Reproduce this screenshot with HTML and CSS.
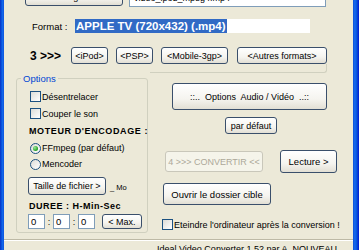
FILE: index.html
```html
<!DOCTYPE html>
<html lang="fr">
<head>
<meta charset="utf-8">
<title>Video Converter</title>
<link rel="stylesheet" href="styles.css">
</head>
<body>
<div class="window">
  <div class="frame-left"></div>
  <div class="client">
    <div class="top-row">
      <button class="btn save-btn">2 &gt;&gt;&gt; Enregistrer sous</button>
      <div class="path">video_ipod_mpeg4.mp4</div>
    </div>
    <div class="format-row">
      <span class="format-label">Format :</span>
      <div class="format-field"><span class="format-sel">APPLE TV (720x432) (.mp4)</span></div>
    </div>
    <div class="presets">
      <span class="step">3 &gt;&gt;&gt;</span>
      <button class="btn w-ipod">&lt;iPod&gt;</button>
      <button class="btn w-psp">&lt;PSP&gt;</button>
      <button class="btn w-mobile">&lt;Mobile-3gp&gt;</button>
      <button class="btn w-autres">&lt;Autres formats&gt;</button>
    </div>
    <div class="sep"></div>
    <div class="main">
      <fieldset class="options">
        <legend>Options</legend>
        <div class="row cbrow"><span class="cb"></span><span>Désentrelacer</span></div>
        <div class="row cbrow"><span class="cb"></span><span>Couper le son</span></div>
        <div class="row head">MOTEUR D'ENCODAGE :</div>
        <div class="row radiorow"><span class="radio on"></span><span>FFmpeg (par défaut)</span></div>
        <div class="row radiorow"><span class="radio"></span><span>Mencoder</span></div>
        <div class="row size-row"><button class="btn taille-btn">Taille de fichier &gt;</button><span class="mo">_ Mo</span></div>
        <div class="row head dur-head">DUREE : H-Min-Sec</div>
        <div class="row dur-row">
          <span class="num first">0</span><span class="colon">:</span>
          <span class="num">0</span><span class="colon">:</span>
          <span class="num">0</span>
          <button class="btn max-btn">&lt; Max.</button>
        </div>
      </fieldset>
      <div class="actions">
        <button class="btn av-btn">::..  Options  Audio / Vidéo  ..::</button>
        <button class="btn def-btn">par défaut</button>
        <div class="convert-row">
          <button class="btn convert-btn">4 &gt;&gt;&gt; CONVERTIR &lt;&lt;</button>
          <button class="btn lecture-btn">Lecture &gt;</button>
        </div>
        <button class="btn open-btn">Ouvrir le dossier cible</button>
        <div class="row off-row"><span class="cb"></span><span>Eteindre l'ordinateur après la conversion !</span></div>
      </div>
    </div>
    <div class="status">Ideal Video Converter 1.52 par A. NOUVEAU</div>
  </div>
  <div class="frame-right"></div>
</div>
</body>
</html>
```

FILE: styles.css
```css
* { box-sizing: border-box; }
html, body { margin: 0; padding: 0; }
body {
  width: 359px;
  height: 250px;
  overflow: hidden;
  background: #ECE9D8;
  font-family: "Liberation Sans", Arial, sans-serif;
  font-size: 9px;
  color: #000;
}
.window { display: flex; width: 359px; height: 250px; }
.frame-left {
  width: 4px;
  flex-shrink: 0;
  background: linear-gradient(90deg, #0A2FC5, #0855DD 40%, #166AEE 70%, #0B4FD8);
}
.frame-right {
  width: 6px;
  flex-shrink: 0;
  background: linear-gradient(90deg, #0B4FD8, #166AEE 30%, #0855DD 60%, #0019CF);
}
.client { flex: 1; display: flex; flex-direction: column; min-width: 0; }

.btn {
  display: flex;
  align-items: center;
  justify-content: center;
  border: 1px solid #3A4F6B;
  border-radius: 3px;
  background: linear-gradient(#FFFFFF, #F5F4EF 60%, #E2DFD4);
  font: inherit;
  color: #000;
  padding: 0;
  margin: 0;
  white-space: nowrap;
  flex-shrink: 0;
}

.top-row { display: flex; height: 18px; margin-top: -12px; flex-shrink: 0; }
.save-btn { margin-left: 21px; width: 98px; height: 18px; }
.path {
  margin-left: 6px;
  width: 197px;
  height: 19px;
  border: 1px solid #7F9DB9;
  background: #fff;
  padding: 2px 4px 0;
  line-height: 14px;
}

.format-row { display: flex; align-items: center; height: 14px; margin-top: 13px; flex-shrink: 0; }
.format-label { margin-left: 28px; width: 43px; font-size: 9.5px; }
.format-field { width: 235px; height: 14px; background: #fff; display: flex; }
.format-sel {
  background: #316AC5;
  color: #fff;
  font-weight: bold;
  font-size: 11.5px;
  line-height: 14px;
  padding: 0 1px;
  white-space: nowrap;
}

.presets { display: flex; align-items: center; height: 17px; margin-top: 14px; flex-shrink: 0; }
.step { margin-left: 26px; width: 41px; font-weight: bold; font-size: 12px; }
.presets .btn { height: 17px; margin-right: 8px; }
.w-ipod { width: 37px; }
.w-psp { width: 37px; }
.presets .w-mobile { width: 67px; margin-right: 9px; }
.w-autres { width: 90px; }

.sep {
  margin-left: 146px;
  width: 177px;
  height: 9px;
  border-bottom: 1px solid #D0D0BF;
  border-right: 1px solid #D0D0BF;
  border-bottom-right-radius: 3px;
  flex-shrink: 0;
}

.main { display: flex; height: 160px; flex-shrink: 0; }
.options {
  margin: 0 0 0 12px;
  width: 132px;
  min-width: 0;
  border: 1px solid #D0D0BF;
  border-radius: 3px;
  padding: 4px 0 3px 12px;
  display: flex;
  flex-direction: column;
}
.options legend {
  color: #0046D5;
  font-size: 9.5px;
  line-height: 11px;
  padding: 0 2px;
  margin-left: -8px;
}
.row { display: flex; align-items: center; white-space: nowrap; }
.cbrow { height: 17px; }
.cb {
  width: 11px;
  height: 11px;
  border: 1px solid #1C5180;
  background: linear-gradient(135deg, #DCDCD7, #FFFFFF);
  margin: 0 1px;
  flex-shrink: 0;
}
.radio {
  width: 11px;
  height: 11px;
  border-radius: 50%;
  border: 1px solid #1C5180;
  background: linear-gradient(135deg, #DCDCD7, #FFFFFF);
  display: flex;
  align-items: center;
  justify-content: center;
  margin: 0 1px;
  flex-shrink: 0;
}
.radio.on::after {
  content: "";
  width: 5px;
  height: 5px;
  border-radius: 50%;
  background: radial-gradient(circle at 35% 35%, #9BE69B, #21A121 70%);
}
.head { height: 18px; font-weight: bold; letter-spacing: 0.6px; }
.radiorow { height: 16px; }
.size-row { margin-top: 5px; height: 18px; }
.taille-btn { margin-left: -1px; width: 78px; height: 18px; }
.mo { margin-left: 4px; font-size: 7.5px; padding-top: 3px; }
.dur-head { height: 16px; margin-top: 3px; letter-spacing: 0.5px; }
.dur-row { height: 15px; }
.num {
  width: 17px;
  height: 15px;
  border: 1px solid #7F9DB9;
  background: #fff;
  padding-left: 2px;
  font-size: 9.5px;
  line-height: 13px;
  flex-shrink: 0;
}
.num.first { margin-left: -1px; }
.colon { width: 8px; text-align: center; }
.max-btn { margin-left: 7px; width: 40px; height: 15px; }

.actions { flex: 1; display: flex; flex-direction: column; align-items: flex-start; min-width: 0; }
.av-btn { margin: 10px 0 0 24px; width: 155px; height: 27px; white-space: pre; }
.def-btn { margin: 7px 0 0 77px; width: 52px; height: 17px; }
.convert-row { display: flex; align-items: center; margin-top: 16px; height: 23px; }
.convert-btn {
  margin-left: 17px;
  width: 98px;
  height: 21px;
  color: #ACA899;
  border-color: #C9C7BA;
  background: #F5F4EA;
}
.lecture-btn { margin-left: 17px; width: 57px; height: 23px; font-size: 9.5px; }
.open-btn { margin: 10px 0 0 15px; width: 108px; height: 22px; font-size: 9.5px; }
.off-row { margin: 14px 0 0 13px; height: 11px; }

.status {
  margin-top: 6px;
  border-top: 1px solid #BDB9A5;
  box-shadow: inset 0 1px #FFFFFF;
  padding: 4px 0 0 153px;
  white-space: nowrap;
  flex: 1;
}
```
